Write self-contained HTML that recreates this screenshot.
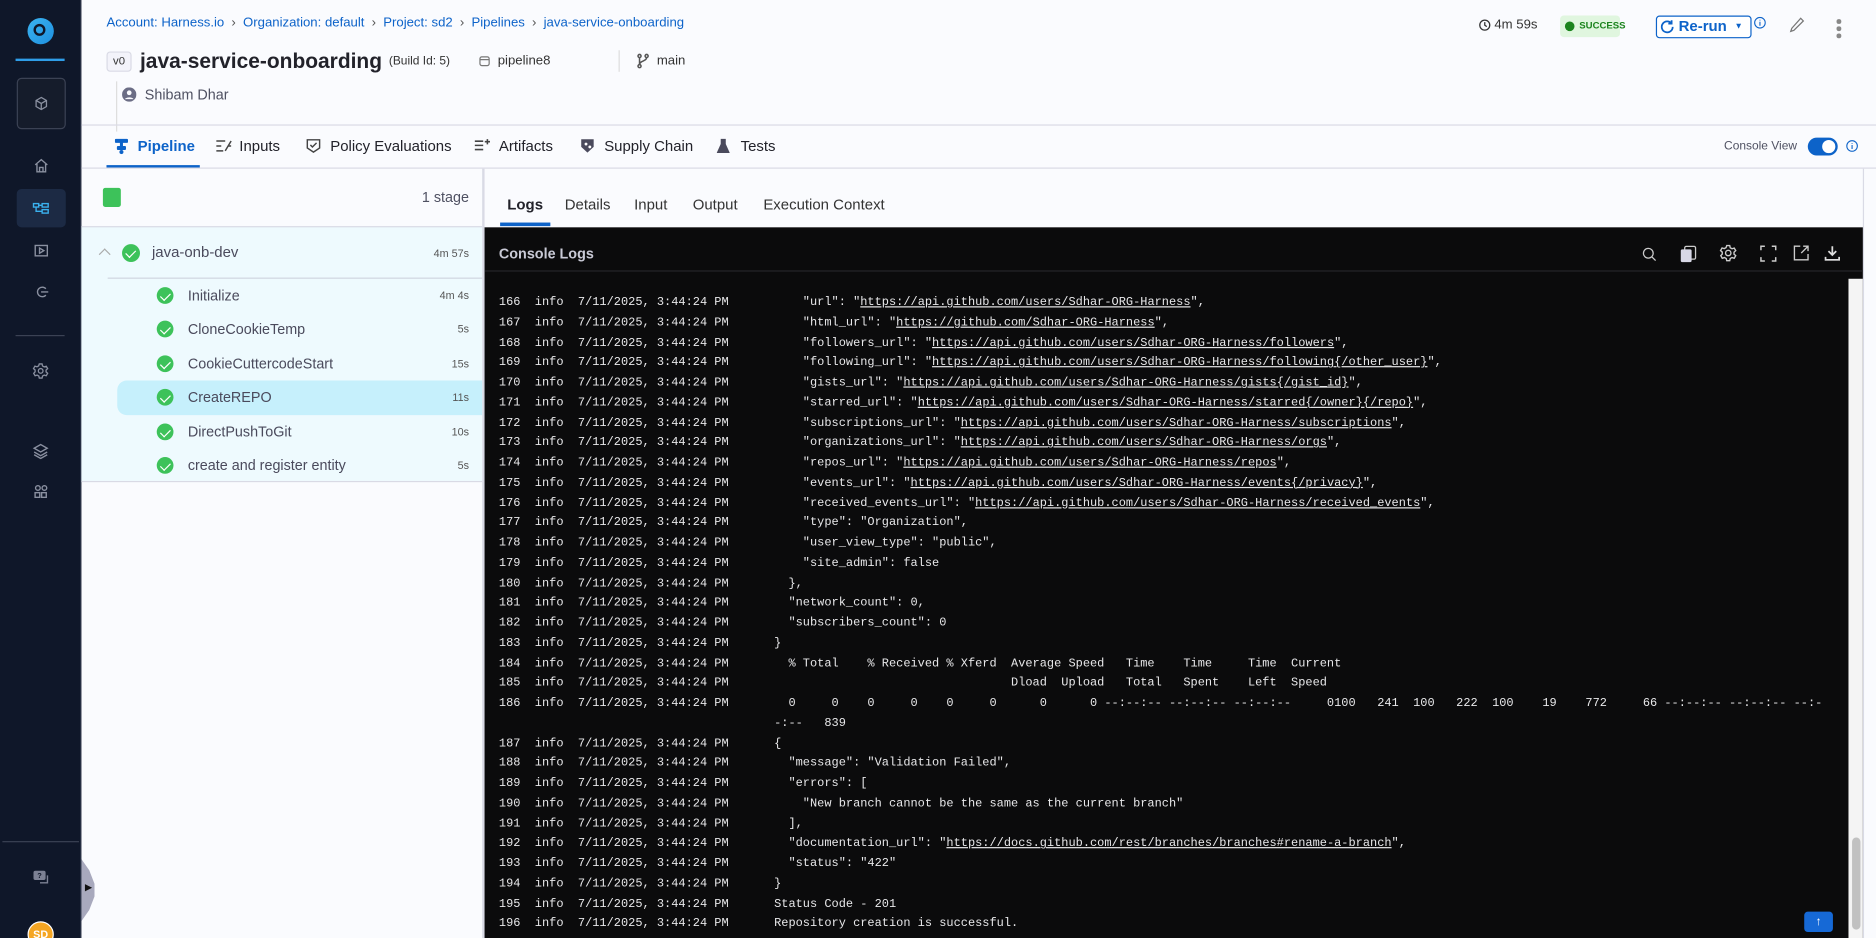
<!DOCTYPE html>
<html><head><meta charset="utf-8"><style>
*{margin:0;padding:0;box-sizing:border-box}
html,body{width:1876px;height:938px;overflow:hidden;background:#fafbfe}
#root{position:absolute;left:0;top:0;width:1568px;height:784px;overflow:hidden;transform:scale(1.196429);transform-origin:0 0;font-family:"Liberation Sans",sans-serif;color:#22222a;background:#fafbfe}
.abs{position:absolute}
.bc{top:13px;left:89px;font-size:11px;color:#0d63c9;white-space:nowrap}
.bc span.sep{color:#555;margin:0 6px}
.tab{top:115px;font-size:12.5px;color:#22222a;white-space:nowrap}
.log{font-family:"Liberation Mono",monospace;font-size:10px;color:#e8e8ea;white-space:pre;line-height:16.75px}
.log u{text-decoration:underline}
.step{left:157px;font-size:12px;color:#4a4a5c}
.chk{position:absolute;left:131px;width:14px;height:14px;border-radius:50%;background:#3dc25a}
.chk:after{content:"";position:absolute;left:4.5px;top:2.5px;width:3.5px;height:6.5px;border:solid #fff;border-width:0 1.8px 1.8px 0;transform:rotate(45deg)}
.dur{right:1176px;font-size:9px;color:#555;text-align:right}
.rtab{top:164px;font-size:12.5px;color:#333}
.si{position:absolute;left:26px}
</style></head><body><div id="root">
<div class="abs" style="left:0;top:0;width:68px;height:784px;background:#0f1729;border-right:1px solid #2a3247"></div>
<div class="abs" style="left:23px;top:15px;width:22px;height:22px;border-radius:50%;background:linear-gradient(135deg,#3bb3f0,#1e90e0)"></div>
<div class="abs" style="left:28px;top:20px;width:10px;height:10px;border-radius:50%;border:2.5px solid #0f1729"></div>
<div class="abs" style="left:13px;top:49px;width:41px;height:2px;background:#2f9de8"></div>
<div class="abs" style="left:14px;top:65px;width:41px;height:43px;border:1px solid #3b4254;border-radius:4px;background:#151c2b"></div>
<svg class="si" style="top:80px;left:28px" width="13" height="13" viewBox="0 0 18 18" fill="none" stroke="#8a90a0" stroke-width="1.5"><path d="M9 2l6 3.5v7L9 16l-6-3.5v-7z M3 5.5L9 9l6-3.5 M9 9v7"/></svg>
<svg class="si" style="top:132px;left:28px" width="13" height="13" viewBox="0 0 18 18" fill="none" stroke="#8a90a0" stroke-width="1.6"><path d="M2 8l7-6 7 6 M4 7v9h10V7 M7 16v-5h4v5"/></svg>
<div class="abs" style="left:14px;top:158px;width:41px;height:32px;background:#1c2a44;border-radius:4px"></div>
<svg class="si" style="top:168px;left:27px" width="15" height="13" viewBox="0 0 20 18" fill="none" stroke="#3ab1ee" stroke-width="1.6"><rect x="1" y="3" width="6" height="4"/><rect x="11" y="3" width="7" height="4"/><rect x="11" y="10" width="7" height="4"/><path d="M7 5h4 M4 7v5h7"/></svg>
<svg class="si" style="top:203px;left:28px" width="13" height="13" viewBox="0 0 18 18" fill="none" stroke="#8a90a0" stroke-width="1.6"><rect x="2" y="3" width="14" height="12"/><path d="M7 6l5 3-5 3z"/></svg>
<svg class="si" style="top:238px;left:29px" width="12" height="12" viewBox="0 0 18 18" fill="none" stroke="#8a90a0" stroke-width="1.7"><path d="M14 5a6 6 0 1 0 0 8 M8 9h9"/></svg>
<div class="abs" style="left:13px;top:280px;width:41px;height:1px;background:#3b4254"></div>
<svg class="si" style="top:303px;left:27px" width="14" height="14" viewBox="0 0 18 18" fill="none" stroke="#8a90a0" stroke-width="1.4"><circle cx="9" cy="9" r="2.5"/><path d="M7.5 1.5h3l.5 2.2 1.8 1 2.2-.7 1.5 2.6-1.7 1.5v2l1.7 1.5-1.5 2.6-2.2-.7-1.8 1-.5 2.2h-3l-.5-2.2-1.8-1-2.2.7-1.5-2.6L3 10V8L1.3 6.5l1.5-2.6 2.2.7 1.8-1z"/></svg>
<svg class="si" style="top:370px;left:27px" width="14" height="14" viewBox="0 0 18 18" fill="none" stroke="#8a90a0" stroke-width="1.5"><path d="M2 6l7-4 7 4-7 4z M2 10l7 4 7-4 M2 13l7 4 7-4"/></svg>
<svg class="si" style="top:404px;left:27px" width="14" height="14" viewBox="0 0 18 18" fill="none" stroke="#8a90a0" stroke-width="1.5"><circle cx="6" cy="5" r="2.5"/><circle cx="13" cy="5" r="2.5"/><rect x="3" y="10" width="5" height="5"/><rect x="10" y="10" width="5" height="5"/></svg>
<div class="abs" style="left:2px;top:703px;width:64px;height:1px;background:#3b4254"></div>
<svg class="abs" style="top:727px;left:27px" width="16" height="14" viewBox="0 0 20 18"><rect x="1" y="1" width="13" height="10" rx="2" fill="#7c8194"/><path d="M16 6v8h-8" fill="none" stroke="#7c8194" stroke-width="1.5"/><text x="5" y="9" font-size="8" fill="#0f1729" font-family="Liberation Sans" font-weight="bold">?</text></svg>
<div class="abs" style="left:23px;top:770px;width:22px;height:22px;border-radius:50%;background:#f5a623;border:1px solid #fff;color:#fff;font-size:9px;font-weight:bold;text-align:center;line-height:20px">SD</div>
<div class="abs" style="left:68px;top:718px;width:11px;height:52px;background:#a8a9bd;clip-path:polygon(0 0,60% 18%,100% 40%,100% 60%,60% 82%,0 100%)"></div>
<div class="abs" style="left:71px;top:739px;width:0;height:0;border-left:6px solid #111;border-top:3.5px solid transparent;border-bottom:3.5px solid transparent"></div>

<div class="abs bc">Account: Harness.io<span class="sep">›</span>Organization: default<span class="sep">›</span>Project: sd2<span class="sep">›</span>Pipelines<span class="sep">›</span>java-service-onboarding</div>
<div class="abs" style="left:89px;top:43px;width:21px;height:17px;border:1px solid #d9dae5;border-radius:3px;background:#f3f3fa;font-size:9.5px;text-align:center;line-height:15px;color:#333">v0</div>
<div class="abs" style="left:117px;top:41px;font-size:17.5px;font-weight:bold;color:#22222a">java-service-onboarding</div>
<div class="abs" style="left:325px;top:46px;font-size:10px;color:#333">(Build Id: 5)</div>
<svg class="abs" style="left:400px;top:46px" width="10" height="10" viewBox="0 0 13 13" fill="none" stroke="#777" stroke-width="1.3"><rect x="1.5" y="2" width="10" height="9.5" rx="2"/><path d="M1.5 5h10"/></svg>
<div class="abs" style="left:416px;top:45px;font-size:11px;color:#333">pipeline8</div>
<div class="abs" style="left:517px;top:42px;width:1px;height:18px;background:#ddd"></div>
<svg class="abs" style="left:532px;top:44px" width="11" height="14" viewBox="0 0 13 16" fill="none" stroke="#555" stroke-width="1.5"><circle cx="3" cy="3" r="1.5"/><circle cx="3" cy="13" r="1.5"/><circle cx="10" cy="3" r="1.5"/><path d="M3 4.5v7 M10 4.5c0 4-7 3-7 7"/></svg>
<div class="abs" style="left:549px;top:45px;font-size:11px;color:#333">main</div>
<div class="abs" style="left:97px;top:68px;width:1px;height:42px;background:#ddd"></div>
<svg class="abs" style="left:102px;top:73px" width="12" height="12" viewBox="0 0 14 14"><circle cx="7" cy="7" r="7" fill="#6b6d85"/><circle cx="7" cy="5.3" r="2.3" fill="#fafbfe"/><path d="M2.8 11.5c1-2.3 7.4-2.3 8.4 0" fill="#fafbfe"/></svg>
<div class="abs" style="left:121px;top:72px;font-size:12px;color:#4f5162">Shibam Dhar</div>

<svg class="abs" style="left:1236px;top:16px" width="10" height="10" viewBox="0 0 12 12" fill="none" stroke="#333" stroke-width="1.3"><circle cx="6" cy="6" r="5"/><path d="M6 3v3l2 1.5"/></svg>
<div class="abs" style="left:1249px;top:15px;font-size:11px;color:#333">4m 59s</div>
<div class="abs" style="left:1304px;top:13px;width:50px;height:18px;background:#e0f6df;border-radius:3px;color:#1b841d;font-size:8px;font-weight:bold;line-height:18px;padding-left:16px">SUCCESS</div>
<div class="abs" style="left:1308px;top:18px;width:8px;height:8px;border-radius:50%;background:#1b841d"></div>
<div class="abs" style="left:1384px;top:13px;width:80px;height:19px;border:1px solid #0d63c9;border-radius:3px;background:#fff;color:#0d63c9;font-size:12.5px;font-weight:bold;line-height:17px;padding-left:18px">Re-run <span style="font-size:7px;margin-left:3px;vertical-align:2px">▼</span></div>
<svg class="abs" style="left:1388px;top:16px" width="11" height="12" viewBox="0 0 12 13" fill="none" stroke="#0d63c9" stroke-width="1.6"><path d="M10 4a5 5 0 1 0 1 3 M10 1v3H7"/></svg>
<svg class="abs" style="left:1466px;top:14px" width="10" height="10" viewBox="0 0 12 12" fill="none" stroke="#0d63c9" stroke-width="1.1"><circle cx="6" cy="6" r="5.3"/><path d="M6 5v4 M6 3v.8"/></svg>
<svg class="abs" style="left:1495px;top:14px" width="14" height="14" viewBox="0 0 15 16" fill="none" stroke="#777" stroke-width="1.2"><path d="M11 1.5l2.5 2.5L4.5 13 1.5 14l1-3z"/></svg>
<div class="abs" style="left:1535px;top:16px;width:3.5px;height:3.5px;border-radius:50%;background:#888;box-shadow:0 6px 0 #888,0 12px 0 #888"></div>

<div class="abs" style="left:68px;top:104px;width:1500px;height:1px;background:#d9dae5"></div>
<div class="abs" style="left:68px;top:140px;width:1500px;height:1px;background:#d9dae5"></div>
<svg class="abs" style="left:96px;top:115px" width="11" height="14" viewBox="0 0 13 16" fill="#0d63c9"><rect x="0" y="1" width="13" height="4" rx="1"/><rect x="5" y="4" width="3" height="6"/><rect x="2" y="8" width="9" height="4" rx="1"/><circle cx="6.5" cy="14" r="2"/></svg>
<div class="abs tab" style="left:115px;color:#0d63c9;font-weight:bold">Pipeline</div>
<div class="abs" style="left:89px;top:138px;width:78px;height:2px;background:#0d63c9"></div>
<svg class="abs" style="left:180px;top:116px" width="14" height="12" viewBox="0 0 17 14" fill="none" stroke="#444" stroke-width="1.5"><path d="M1 2h9 M1 7h5 M1 12h7 M10 12l6-10 M13 7h3"/></svg>
<div class="abs tab" style="left:200px">Inputs</div>
<svg class="abs" style="left:256px;top:115px" width="12" height="14" viewBox="0 0 14 16" fill="none" stroke="#444" stroke-width="1.4"><path d="M1 2h12v8l-6 4-6-4z M4 7l2 2 4-4"/></svg>
<div class="abs tab" style="left:276px">Policy Evaluations</div>
<svg class="abs" style="left:396px;top:116px" width="14" height="11" viewBox="0 0 16 12" fill="none" stroke="#444" stroke-width="1.5"><path d="M1 2h8 M1 6h8 M1 10h8 M13 0v5 M10.5 2.5h5"/></svg>
<div class="abs tab" style="left:417px">Artifacts</div>
<svg class="abs" style="left:485px;top:115px" width="12" height="14" viewBox="0 0 15 16"><path d="M1 1h13v8l-6.5 6L1 9z" fill="#4a4a5c"/><circle cx="6" cy="6" r="1.5" fill="#fff"/><circle cx="10" cy="9" r="1.5" fill="#fff"/></svg>
<div class="abs tab" style="left:505px">Supply Chain</div>
<svg class="abs" style="left:599px;top:115px" width="11" height="14" viewBox="0 0 13 16"><path d="M4 1h5v5l4 9H0l4-9z" fill="#4a4a5c"/></svg>
<div class="abs tab" style="left:619px">Tests</div>
<div class="abs" style="left:1441px;top:117px;font-size:10px;color:#4f5162">Console View</div>
<div class="abs" style="left:1511px;top:115px;width:25px;height:15px;border-radius:8px;background:#0d63c9"></div>
<div class="abs" style="left:1523px;top:117px;width:11px;height:11px;border-radius:50%;background:#fff"></div>
<svg class="abs" style="left:1543px;top:117px" width="10" height="10" viewBox="0 0 12 12" fill="none" stroke="#0d63c9" stroke-width="1.1"><circle cx="6" cy="6" r="5.3"/><path d="M6 5v4 M6 3v.8"/></svg>

<div class="abs" style="left:403px;top:141px;width:2px;height:643px;background:#d9dae5"></div>
<div class="abs" style="left:86px;top:157px;width:15px;height:16px;background:#3dc25a;border-radius:2px"></div>
<div class="abs" style="left:300px;top:158px;width:92px;text-align:right;font-size:12px;color:#4f5162">1 stage</div>
<div class="abs" style="left:68px;top:189px;width:335px;height:214px;background:#eefafe;border-top:1px solid #d9dae5;border-bottom:1px solid #d9dae5"></div>
<div class="abs" style="left:84px;top:209px;width:7px;height:7px;border-left:1.3px solid #aaa;border-top:1.3px solid #aaa;transform:rotate(45deg)"></div>
<div class="chk" style="left:102px;top:204px;width:15px;height:15px"></div>
<div class="abs" style="left:127px;top:204px;font-size:12.5px;color:#4a4a5c">java-onb-dev</div>
<div class="abs dur" style="top:207px">4m 57s</div>
<div class="abs" style="left:90px;top:232px;width:313px;height:1px;background:#d0d6e0"></div>
<div class="abs" style="left:98px;top:318px;width:305px;height:29px;background:#c6f0fc;border-radius:8px 0 0 8px"></div>
<div class="chk" style="top:240px"></div><div class="abs step" style="top:240px">Initialize</div><div class="abs dur" style="top:242px">4m 4s</div>
<div class="chk" style="top:268px"></div><div class="abs step" style="top:268px">CloneCookieTemp</div><div class="abs dur" style="top:270px">5s</div>
<div class="chk" style="top:297px"></div><div class="abs step" style="top:297px">CookieCuttercodeStart</div><div class="abs dur" style="top:299px">15s</div>
<div class="chk" style="top:325px"></div><div class="abs step" style="top:325px">CreateREPO</div><div class="abs dur" style="top:327px">11s</div>
<div class="chk" style="top:354px"></div><div class="abs step" style="top:354px">DirectPushToGit</div><div class="abs dur" style="top:356px">10s</div>
<div class="chk" style="top:382px"></div><div class="abs step" style="top:382px">create and register entity</div><div class="abs dur" style="top:384px">5s</div>

<div class="abs rtab" style="left:424px;font-weight:bold;color:#22222a">Logs</div>
<div class="abs" style="left:418px;top:186px;width:42px;height:3px;background:#0d63c9"></div>
<div class="abs rtab" style="left:472px">Details</div>
<div class="abs rtab" style="left:530px">Input</div>
<div class="abs rtab" style="left:579px">Output</div>
<div class="abs rtab" style="left:638px">Execution Context</div>
<div class="abs" style="left:1557px;top:141px;width:1px;height:643px;background:#d9dae5"></div>

<div class="abs" style="left:405px;top:190px;width:1152px;height:594px;background:#0b0b0c"></div>
<div class="abs" style="left:405px;top:226px;width:1152px;height:1px;background:#26262a"></div>
<div class="abs" style="left:417px;top:205px;font-size:12px;font-weight:bold;color:#c9cad6">Console Logs</div>
<svg class="abs" style="left:1372px;top:206px" width="13" height="13" viewBox="0 0 16 16" fill="none" stroke="#ccc" stroke-width="1.3"><circle cx="7" cy="7" r="5"/><path d="M10.5 10.5l4 4"/></svg>
<svg class="abs" style="left:1404px;top:205px" width="14" height="15" viewBox="0 0 17 18"><rect x="5" y="1" width="11" height="13" rx="1.5" fill="none" stroke="#ccc" stroke-width="1.3"/><rect x="1" y="4" width="11" height="13" rx="1.5" fill="#d8d8e6"/></svg>
<svg class="abs" style="left:1437px;top:204px" width="15" height="15" viewBox="0 0 18 18" fill="none" stroke="#ccc" stroke-width="1.4"><circle cx="9" cy="9" r="2.7"/><path d="M7.5 1.5h3l.5 2.2 1.8 1 2.2-.7 1.5 2.6-1.7 1.5v2l1.7 1.5-1.5 2.6-2.2-.7-1.8 1-.5 2.2h-3l-.5-2.2-1.8-1-2.2.7-1.5-2.6L3 10V8L1.3 6.5l1.5-2.6 2.2.7 1.8-1z"/></svg>
<svg class="abs" style="left:1471px;top:205px" width="14" height="14" viewBox="0 0 17 17" fill="none" stroke="#ccc" stroke-width="1.5"><path d="M1 5V1h4 M12 1h4v4 M16 12v4h-4 M5 16H1v-4"/></svg>
<svg class="abs" style="left:1499px;top:205px" width="13" height="13" viewBox="0 0 16 16" fill="none" stroke="#ccc" stroke-width="1.4"><path d="M7 1H1v14h14V9 M10 1h5v5 M15 1L8 8"/></svg>
<svg class="abs" style="left:1525px;top:205px" width="13" height="13" viewBox="0 0 16 16" fill="none" stroke="#ddd" stroke-width="1.8"><path d="M8 1v9 M4 6l4 4 4-4 M1 12v3h14v-3"/></svg>
<div class="abs" style="left:1545px;top:233px;width:12px;height:551px;background:#f4f4f4"></div>
<div class="abs" style="left:1548px;top:700px;width:7px;height:77px;border-radius:4px;background:#c1c1c1"></div>

<div class="abs log" style="left:417px;top:246px">166  info  7/11/2025, 3:44:24 PM
167  info  7/11/2025, 3:44:24 PM
168  info  7/11/2025, 3:44:24 PM
169  info  7/11/2025, 3:44:24 PM
170  info  7/11/2025, 3:44:24 PM
171  info  7/11/2025, 3:44:24 PM
172  info  7/11/2025, 3:44:24 PM
173  info  7/11/2025, 3:44:24 PM
174  info  7/11/2025, 3:44:24 PM
175  info  7/11/2025, 3:44:24 PM
176  info  7/11/2025, 3:44:24 PM
177  info  7/11/2025, 3:44:24 PM
178  info  7/11/2025, 3:44:24 PM
179  info  7/11/2025, 3:44:24 PM
180  info  7/11/2025, 3:44:24 PM
181  info  7/11/2025, 3:44:24 PM
182  info  7/11/2025, 3:44:24 PM
183  info  7/11/2025, 3:44:24 PM
184  info  7/11/2025, 3:44:24 PM
185  info  7/11/2025, 3:44:24 PM
186  info  7/11/2025, 3:44:24 PM

187  info  7/11/2025, 3:44:24 PM
188  info  7/11/2025, 3:44:24 PM
189  info  7/11/2025, 3:44:24 PM
190  info  7/11/2025, 3:44:24 PM
191  info  7/11/2025, 3:44:24 PM
192  info  7/11/2025, 3:44:24 PM
193  info  7/11/2025, 3:44:24 PM
194  info  7/11/2025, 3:44:24 PM
195  info  7/11/2025, 3:44:24 PM
196  info  7/11/2025, 3:44:24 PM</div>
<div class="abs log" style="left:647px;top:246px">    "url": "<u>https://api.github.com/users/Sdhar-ORG-Harness</u>",
    "html_url": "<u>https://github.com/Sdhar-ORG-Harness</u>",
    "followers_url": "<u>https://api.github.com/users/Sdhar-ORG-Harness/followers</u>",
    "following_url": "<u>https://api.github.com/users/Sdhar-ORG-Harness/following{/other_user}</u>",
    "gists_url": "<u>https://api.github.com/users/Sdhar-ORG-Harness/gists{/gist_id}</u>",
    "starred_url": "<u>https://api.github.com/users/Sdhar-ORG-Harness/starred{/owner}{/repo}</u>",
    "subscriptions_url": "<u>https://api.github.com/users/Sdhar-ORG-Harness/subscriptions</u>",
    "organizations_url": "<u>https://api.github.com/users/Sdhar-ORG-Harness/orgs</u>",
    "repos_url": "<u>https://api.github.com/users/Sdhar-ORG-Harness/repos</u>",
    "events_url": "<u>https://api.github.com/users/Sdhar-ORG-Harness/events{/privacy}</u>",
    "received_events_url": "<u>https://api.github.com/users/Sdhar-ORG-Harness/received_events</u>",
    "type": "Organization",
    "user_view_type": "public",
    "site_admin": false
  },
  "network_count": 0,
  "subscribers_count": 0
}
  % Total    % Received % Xferd  Average Speed   Time    Time     Time  Current
                                 Dload  Upload   Total   Spent    Left  Speed
  0     0    0     0    0     0      0      0 --:--:-- --:--:-- --:--:--     0100   241  100   222  100    19    772     66 --:--:-- --:--:-- --:-
-:--   839
{
  "message": "Validation Failed",
  "errors": [
    "New branch cannot be the same as the current branch"
  ],
  "documentation_url": "<u>https://docs.github.com/rest/branches/branches#rename-a-branch</u>",
  "status": "422"
}
Status Code - 201
Repository creation is successful.</div>
<div class="abs" style="left:1508px;top:762px;width:24px;height:17px;border-radius:3px;background:#1669d6;color:#fff;font-size:10px;text-align:center;line-height:17px;font-weight:bold">↑</div>
</div></body></html>
